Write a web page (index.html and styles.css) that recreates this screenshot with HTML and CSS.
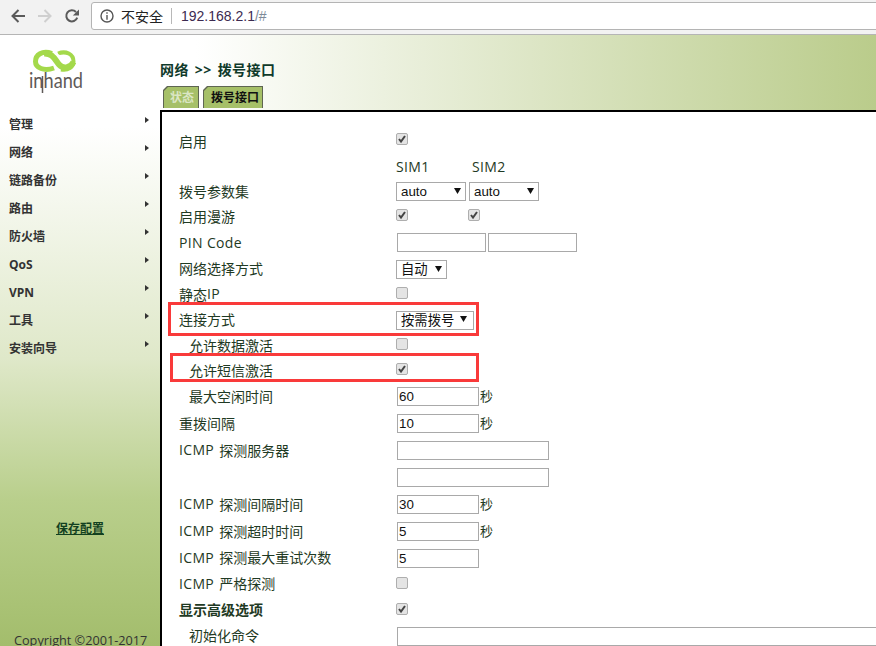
FILE: index.html
```html
<!DOCTYPE html>
<html lang="zh-CN">
<head>
<meta charset="utf-8">
<title>拨号接口</title>
<link rel="stylesheet" href="styles.css">
</head>
<body>
<header class="chrome">
  <svg class="nav-icon" width="16" height="16" viewBox="0 0 16 16"><path d="M15 8H2.500M8.500 2 2.500 8l6 6" fill="none" stroke="#5a5a5a" stroke-width="2"/></svg>
  <svg class="nav-icon" width="16" height="16" viewBox="0 0 16 16"><path d="M1 8h12.500M7.500 2l6 6-6 6" fill="none" stroke="#cfcfcf" stroke-width="2"/></svg>
  <svg class="nav-icon" width="16" height="16" viewBox="0 0 16 16"><path d="M13.200 9.600A5.600 5.600 0 1 1 12 4" fill="none" stroke="#5a5a5a" stroke-width="2"/><path d="M15 1.400v6.200H8.800z" fill="#5a5a5a"/></svg>
  <div class="omnibox">
    <svg width="14" height="14" viewBox="0 0 14 14"><circle cx="7" cy="7" r="6" fill="none" stroke="#555" stroke-width="1.400"/><path d="M6.300 3.200h1.400v1.500H6.300zM6.300 5.900h1.400v4.900H6.300z" fill="#555"/></svg>
    <span class="secure">不安全</span>
    <span class="sep"></span>
    <span class="url">192.168.2.1<span class="url-dim">/#</span></span>
  </div>
</header>
<div class="page">
  <aside class="sidebar">
    <svg class="logo" width="64" height="50" viewBox="0 0 64 50">
      <path d="M25 4.500C15 1 8.500 6 8.500 12.500C8.500 19 17 22.500 27 19" fill="none" stroke="#a4d94b" stroke-width="5"/>
      <path d="M17 4.500C26 4 28 11 32 15.500C37 21 44 18 46.500 13" fill="none" stroke="#a4d94b" stroke-width="6"/>
      <path d="M31 4.500C39 1.500 46.500 5 46.500 12.500C46.500 18 41 22 34 20.500" fill="none" stroke="#a4d94b" stroke-width="4"/>
      <path d="M28 4.500C31 6 33 7 36 8.500" fill="none" stroke="#fff" stroke-width="1.500"/>
      <text class="logo-text" x="2" y="39" textLength="54" lengthAdjust="spacingAndGlyphs">inhand</text>
      <path d="M15.500 27v17" stroke="#5f5a58" stroke-width="1.500"/>
    </svg>
    <nav class="menu">
      <a class="menu-item">管理</a>
      <a class="menu-item">网络</a>
      <a class="menu-item">链路备份</a>
      <a class="menu-item">路由</a>
      <a class="menu-item">防火墙</a>
      <a class="menu-item">QoS</a>
      <a class="menu-item">VPN</a>
      <a class="menu-item">工具</a>
      <a class="menu-item">安装向导</a>
    </nav>
    <a class="save">保存配置</a>
    <p class="copyright">Copyright ©2001-2017</p>
  </aside>
  <main class="main">
    <div class="head">
      <h1 class="crumb">网络 &gt;&gt; 拨号接口</h1>
      <div class="tabs">
        <span class="tab"><span class="tab-in tab-off">状态</span></span>
        <span class="tab"><span class="tab-in tab-on">拨号接口</span></span>
      </div>
    </div>
    <section class="panel">
      <form class="form">
        <label class="lbl">启用</label><div class="ctl"><input class="chk chk-first" type="checkbox" checked></div>
        <span class="lbl"></span><div class="ctl"><span class="sim en">SIM1</span><span class="sim en">SIM2</span></div>
        <label class="lbl">拨号参数集</label><div class="ctl ctl-sel"><select class="sel sel-auto"><option>auto</option></select><select class="sel sel-auto"><option>auto</option></select></div>
        <label class="lbl">启用漫游</label><div class="ctl"><input class="chk chk-sim" type="checkbox" checked><input class="chk" type="checkbox" checked></div>
        <label class="lbl en lbl-en">PIN Code</label><div class="ctl ctl-pin"><input class="txt txt-pin" type="text"><input class="txt txt-pin" type="text"></div>
        <label class="lbl">网络选择方式</label><div class="ctl"><select class="sel sel-net"><option>自动</option></select></div>
        <label class="lbl">静态<span class="en">IP</span></label><div class="ctl"><input class="chk" type="checkbox"></div>
        <label class="lbl">连接方式</label><div class="ctl"><select class="sel sel-conn"><option>按需拨号</option></select></div>
        <label class="lbl sub">允许数据激活</label><div class="ctl"><input class="chk" type="checkbox"></div>
        <label class="lbl sub">允许短信激活</label><div class="ctl"><input class="chk" type="checkbox" checked></div>
        <label class="lbl sub">最大空闲时间</label><div class="ctl"><input class="txt txt-num" type="text" value="60"><span class="unit">秒</span></div>
        <label class="lbl">重拨间隔</label><div class="ctl"><input class="txt txt-num" type="text" value="10"><span class="unit">秒</span></div>
        <label class="lbl"><span class="en en-gap">ICMP</span>探测服务器</label><div class="ctl"><input class="txt txt-host" type="text"></div>
        <span class="lbl"></span><div class="ctl"><input class="txt txt-host" type="text"></div>
        <label class="lbl"><span class="en en-gap">ICMP</span>探测间隔时间</label><div class="ctl"><input class="txt txt-num" type="text" value="30"><span class="unit">秒</span></div>
        <label class="lbl"><span class="en en-gap">ICMP</span>探测超时时间</label><div class="ctl"><input class="txt txt-num" type="text" value="5"><span class="unit">秒</span></div>
        <label class="lbl"><span class="en en-gap">ICMP</span>探测最大重试次数</label><div class="ctl"><input class="txt txt-num" type="text" value="5"></div>
        <label class="lbl"><span class="en en-gap">ICMP</span>严格探测</label><div class="ctl"><input class="chk" type="checkbox"></div>
        <label class="lbl strong">显示高级选项</label><div class="ctl"><input class="chk" type="checkbox" checked></div>
        <label class="lbl sub">初始化命令</label><div class="ctl"><input class="txt txt-wide" type="text"></div>
      </form>
      <div class="mark mark-a"></div>
      <div class="mark mark-b"></div>
    </section>
  </main>
</div>
</body>
</html>
```
FILE: styles.css
```css
* { box-sizing: border-box; }
html, body { margin: 0; height: 646px; overflow: hidden; background: #fff; }
body { font-family: "Open Sans", "Noto Sans CJK SC", sans-serif; font-size: 14px; color: #1f3a24; display: flex; flex-direction: column; }

.chrome { height: 35px; flex: none; background: #f2f2f2; border-bottom: 1px solid #b5b5b5; display: flex; align-items: flex-start; padding: 8px 0 0 10px; gap: 11px; }
.nav-icon { flex: none; }
.omnibox { flex: 1; margin: -6px -4px 0 0; height: 28px; background: #fff; border: 1px solid #b4b4b4; border-radius: 3px 0 0 3px; display: flex; align-items: center; padding-left: 8px; font-family: "Liberation Sans", "Noto Sans CJK SC", sans-serif; font-size: 14px; color: #222; }
.secure { margin-left: 7px; }
.sep { width: 1px; height: 16px; background: #b8b8b8; margin: 0 9px 0 8px; }
.url { color: #3c2a50; }
.url-dim { color: #7d8a99; }

.page { flex: 1; display: grid; grid-template-columns: 160px 1fr; min-height: 0; }

.sidebar { display: flex; flex-direction: column; background: linear-gradient(#fff 0, #fff 15%, #dfe8c9 53%, #b9cf8c 76%, #a3bd6c 100%); min-height: 0; }
.logo { display: block; margin: 14px 0 0 27px; flex: none; }
.logo-text { font-family: "Lato", sans-serif; font-weight: 400; font-size: 22px; fill: #5f5a58; }
.menu { display: flex; flex-direction: column; margin-top: 12px; }
.menu-item { height: 28px; line-height: 28px; padding-left: 9px; font-size: 12px; font-weight: 700; color: #333; position: relative; }
.menu-item::after { content: ""; position: absolute; left: 145px; top: 6px; border-left: 4px solid #333; border-top: 3.500px solid transparent; border-bottom: 3.500px solid transparent; }
.save { margin: 157px 0 0 56px; font-size: 12px; font-weight: 700; color: #12401f; text-decoration: underline; line-height: 18px; }
.copyright { margin: auto 0 -3px 14px; font-size: 12.700px; line-height: 17px; color: #333; white-space: nowrap; }

.main { display: flex; flex-direction: column; min-width: 0; min-height: 0; }
.head { height: 75px; flex: none; background: linear-gradient(90deg, #fff 5%, #bacc8b 100%); padding: 26px 0 0 0; }
.crumb { margin: 0; font-size: 14px; line-height: 18px; font-weight: 700; word-spacing: 2px; letter-spacing: 0.4px; color: #0f3a2a; white-space: nowrap; }
.tabs { display: flex; gap: 4px; margin: 7px 0 0 3px; }
.tab { display: block; padding: 1px 1px 0; background: #5e6552; clip-path: polygon(4px 0, 100% 0, 100% 100%, 0 100%, 0 4px); }
.tab-in { display: block; height: 21px; line-height: 21px; padding: 0 4px 0 6px; font-size: 12px; font-weight: 700; color: #111; background: #a6c068; clip-path: polygon(4px 0, 100% 0, 100% 100%, 0 100%, 0 4px); }
.tab-on { padding: 0 3px 0 7px; }
.tab-off { color: #dbe6c4; }

.panel { flex: 1; position: relative; background: #fff; border-top: 2px solid #000; border-left: 2px solid #000; overflow: hidden; min-height: 0; }
.form { display: grid; grid-template-columns: 217px 1fr; grid-template-rows: 25px 25px 25px 25px 27px 26px 25px 26px 25px 25px 27px 27px 27px 27px 27px 27px 26px 26px 26px 26px; padding: 17px 0 0 17px; }
.lbl { display: flex; align-items: center; white-space: nowrap; font-size: 14px; padding-bottom: 2px; }
.lbl-en { padding-bottom: 0; }
.en { letter-spacing: 0.35px; }
.en-gap { margin-right: 5px; }
.sub { padding-left: 10px; }
.strong { font-weight: 700; }
.ctl { display: flex; align-items: center; min-width: 0; }
.ctl-sel { gap: 3px; }
.ctl-pin { gap: 2px; }
.sim { width: 76px; padding-bottom: 1px; }
.unit { margin: 0 0 2px 1px; font-size: 13px; }

.chk { appearance: none; -webkit-appearance: none; width: 12px; height: 12px; margin: 0 0 3px; background: #e4e4e4; border: 1px solid #aeaeae; border-radius: 2px; flex: none; }
.chk:checked { background: #e4e4e4 url("data:image/svg+xml,%3Csvg xmlns='http://www.w3.org/2000/svg' width='10' height='10'%3E%3Cpath d='M2 5l2 2.500L8 2' fill='none' stroke='%23444' stroke-width='2'/%3E%3C/svg%3E") center no-repeat; }
.chk-first { margin-bottom: 5px; }
.chk-sim { margin-right: 60px; }

.sel { appearance: none; -webkit-appearance: none; height: 19px; margin: 0; padding: 0 0 0 4px; border: 1px solid #a9a9a9; border-radius: 0; font: 13.330px "Liberation Sans", "Noto Sans CJK SC", sans-serif; color: #111; background: #fff url("data:image/svg+xml,%3Csvg xmlns='http://www.w3.org/2000/svg' width='7' height='6'%3E%3Cpath d='M0 0h7L3.500 6z' fill='%23111'/%3E%3C/svg%3E") no-repeat; }
.sel-auto { width: 70px; background-position: 57px 5px; }
.sel-net { width: 51px; background-position: 38px 5px; }
.sel-conn { width: 78px; background-position: 63px 4px; }

.txt { height: 19px; margin: 0 0 0 1px; padding: 0 1px; border: 1px solid #a9a9a9; border-radius: 0; font: 13.330px "Liberation Sans", sans-serif; color: #111; background: #fff; outline: none; }
.txt-pin { width: 89px; }
.txt-pin + .txt-pin { margin-left: 0; }
.txt-num { width: 82px; }
.txt-host { width: 152px; }
.txt-wide { flex: 1; min-width: 600px; }

.mark { position: absolute; border: 3px solid #f93a3a; pointer-events: none; }
.mark-a { left: 6px; top: 190px; width: 311px; height: 34px; }
.mark-b { left: 8px; top: 241px; width: 309px; height: 29px; }
```
